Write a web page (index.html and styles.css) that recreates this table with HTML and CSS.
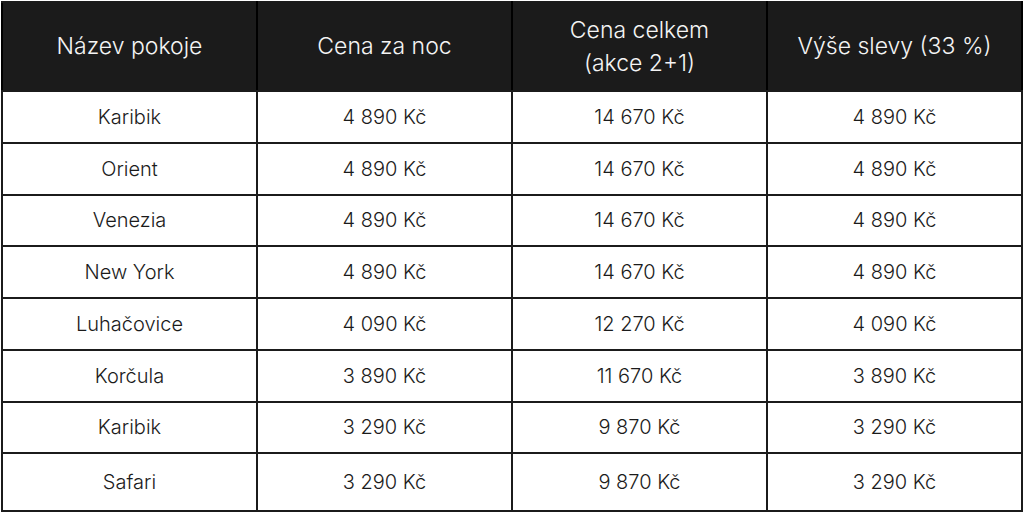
FILE: index.html
```html
<!DOCTYPE html>
<html lang="cs">
<head>
<meta charset="utf-8">
<link rel="stylesheet" href="styles.css">
</head>
<body>
<table class="price-table">
  <thead>
    <tr>
      <th>Název pokoje</th>
      <th>Cena za noc</th>
      <th>Cena celkem<br>(akce 2+1)</th>
      <th>Výše slevy (33 %)</th>
    </tr>
  </thead>
  <tbody>
    <tr><td>Karibik</td><td>4 890 Kč</td><td>14 670 Kč</td><td>4 890 Kč</td></tr>
    <tr><td>Orient</td><td>4 890 Kč</td><td>14 670 Kč</td><td>4 890 Kč</td></tr>
    <tr><td>Venezia</td><td>4 890 Kč</td><td>14 670 Kč</td><td>4 890 Kč</td></tr>
    <tr><td>New York</td><td>4 890 Kč</td><td>14 670 Kč</td><td>4 890 Kč</td></tr>
    <tr><td>Luhačovice</td><td>4 090 Kč</td><td>12 270 Kč</td><td>4 090 Kč</td></tr>
    <tr><td>Korčula</td><td>3 890 Kč</td><td>11 670 Kč</td><td>3 890 Kč</td></tr>
    <tr><td>Karibik</td><td>3 290 Kč</td><td>9 870 Kč</td><td>3 290 Kč</td></tr>
    <tr class="last"><td>Safari</td><td>3 290 Kč</td><td>9 870 Kč</td><td>3 290 Kč</td></tr>
  </tbody>
</table>
</body>
</html>
```
FILE: styles.css
```css
html, body {
  margin: 0;
  padding: 0;
  background: #ffffff;
}
body {
  width: 1024px;
  height: 512px;
  overflow: hidden;
  font-family: Inter, "Noto Sans", "Liberation Sans", sans-serif;
}
.price-table {
  width: 1022px;
  margin: 1px 0 0 1px;
  border-collapse: collapse;
  table-layout: fixed;
}
.price-table th,
.price-table td {
  border: 2px solid #1b1b1b;
  text-align: center;
  vertical-align: middle;
  padding: 0;
  width: 25%;
}
.price-table th {
  background: #1b1b1b;
  color: #f4f4f4;
  font-weight: 320;
  font-size: 23px;
  line-height: 33px;
  height: 87px;
  border-left-color: #000;
  border-right-color: #000;
}
.price-table td {
  color: #1b1b1b;
  font-weight: 360;
  font-size: 20px;
  height: 49.75px;
}
.price-table tr.last td {
  height: 55.75px;
}
```
